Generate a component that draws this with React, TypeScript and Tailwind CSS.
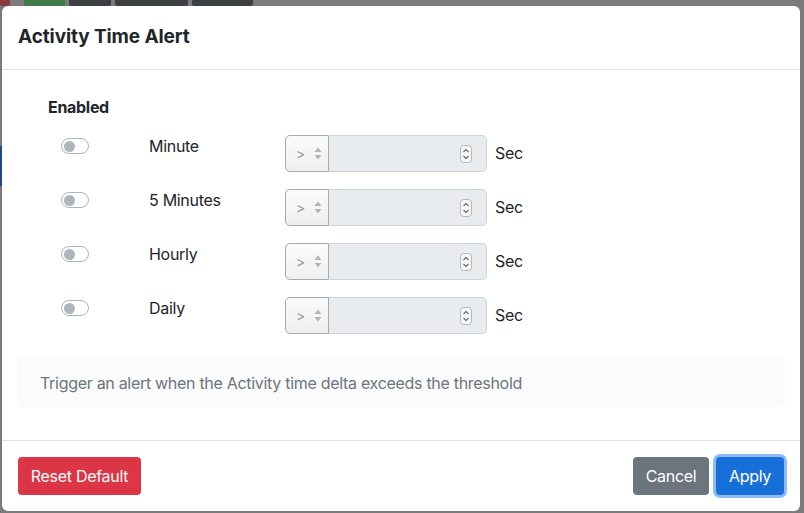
import { useState } from 'react'

const rows = ['Minute', '5 Minutes', 'Hourly', 'Daily']

function Switch() {
  return (
    <div className="w-[28px] h-[16px] rounded-full border border-[#adb5bd] bg-white flex items-center px-[2px]">
      <div className="w-[11px] h-[11px] rounded-full bg-[#adb5bd]" />
    </div>
  )
}

function OperatorSelect() {
  return (
    <div className="w-[44px] h-[37px] rounded-l-[5px] border border-[#a9a9a9] bg-gradient-to-b from-[#fbfbfb] to-[#efefef] flex items-center pl-[10px] gap-[9px] text-[#9a9a9a]">
      <span className="text-[14px] leading-none">&gt;</span>
      <svg width="8" height="13" viewBox="0 0 8 13" fill="#b4b4b4">
        <path d="M4 0.5 L7.5 5 L0.5 5 Z" />
        <path d="M4 12.5 L7.5 8 L0.5 8 Z" />
      </svg>
    </div>
  )
}

function Spinner() {
  return (
    <svg width="12" height="18" viewBox="0 0 12 18" fill="none" stroke="#666">
      <rect x="0.5" y="0.5" width="11" height="17" rx="3" stroke="#b8b8b8" fill="#f7f7f7" />
      <path d="M3.5 7 L6 4.5 L8.5 7" strokeWidth="1.1" />
      <path d="M3.5 11 L6 13.5 L8.5 11" strokeWidth="1.1" />
    </svg>
  )
}

export default function App() {
  const [enabled] = useState(rows.map(() => false))

  return (
    <div className="w-[804px] h-[513px] overflow-hidden bg-[#7b7b7b] flex flex-col font-['Inter','Liberation_Sans',sans-serif] text-[#212529]">
      {/* page behind the backdrop */}
      <div className="h-[6px] overflow-hidden flex items-end gap-[4px] shrink-0">
        <div className="w-[10px] h-[14px] bg-[#8b3b40] rounded-[2px]" />
        <div className="ml-[10px] w-[41px] h-[14px] bg-[#3f7c4a] rounded-[2px]" />
        <div className="w-[42px] h-[14px] bg-[#3d3f42] rounded-[2px]" />
        <div className="w-[73px] h-[14px] bg-[#3d3f42] rounded-[2px]" />
        <div className="w-[61px] h-[14px] bg-[#3d3f42] rounded-[2px]" />
      </div>

      <div className="flex flex-1 min-h-0">
        <div className="w-[2px] shrink-0 flex flex-col">
          <div className="h-[140px]" />
          <div className="h-[40px] bg-[#1f4a87]" />
        </div>

        {/* modal */}
        <div className="w-[798px] h-[505px] shrink-0 bg-white rounded-[6px] flex flex-col tracking-[-0.3px]">
          <div className="h-[64px] border-b border-[#dee2e6] px-[16px] flex items-center shrink-0">
            <h5 className="text-[19px] font-bold tracking-[-0.1px]">Activity Time Alert</h5>
          </div>

          <div className="px-[15px] pt-[25px] pb-[33px] border-b border-[#dee2e6]">
            <div className="pl-[31px] text-[16px] font-bold leading-[24px]">Enabled</div>
            <div className="mt-[15px] flex flex-col gap-[16px]">
              {rows.map((r, i) => (
                <div key={r} className="flex items-start h-[38px]">
                  <div className="w-[132px] pl-[44px] pt-[4px]" data-on={enabled[i]}>
                    <Switch />
                  </div>
                  <div className="w-[136px] text-[16px] leading-[24px]">{r}</div>
                  <div className="flex items-center pt-[1px]">
                    <OperatorSelect />
                    <div className="w-[158px] h-[37px] bg-[#e9ecef] border border-l-0 border-[#ced4da] rounded-r-[5px] flex items-center justify-end pr-[14px]">
                      <Spinner />
                    </div>
                    <span className="ml-[8px] text-[16px] -mt-[1px]">Sec</span>
                  </div>
                </div>
              ))}
            </div>
            <div className="mt-[24px] h-[49px] bg-[#fbfbfb] rounded-[4px] flex items-center px-[23px] text-[16px] text-[#6c757d]">
              Trigger an alert when the Activity time delta exceeds the threshold
            </div>
          </div>

          <div className="flex items-center justify-between px-[16px] pt-[16px]">
            <button className="h-[38px] w-[123px] rounded-[4px] bg-[#dc3545] text-white text-[16px]">Reset Default</button>
            <div className="flex items-center gap-[7px]">
              <button className="h-[38px] w-[76px] rounded-[4px] bg-[#6c757d] text-white text-[16px]">Cancel</button>
              <button className="h-[38px] w-[68px] rounded-[4px] bg-[#1770da] text-white text-[16px] ring-[3px] ring-[#8dbcf3]">Apply</button>
            </div>
          </div>
        </div>
      </div>
    </div>
  )
}
